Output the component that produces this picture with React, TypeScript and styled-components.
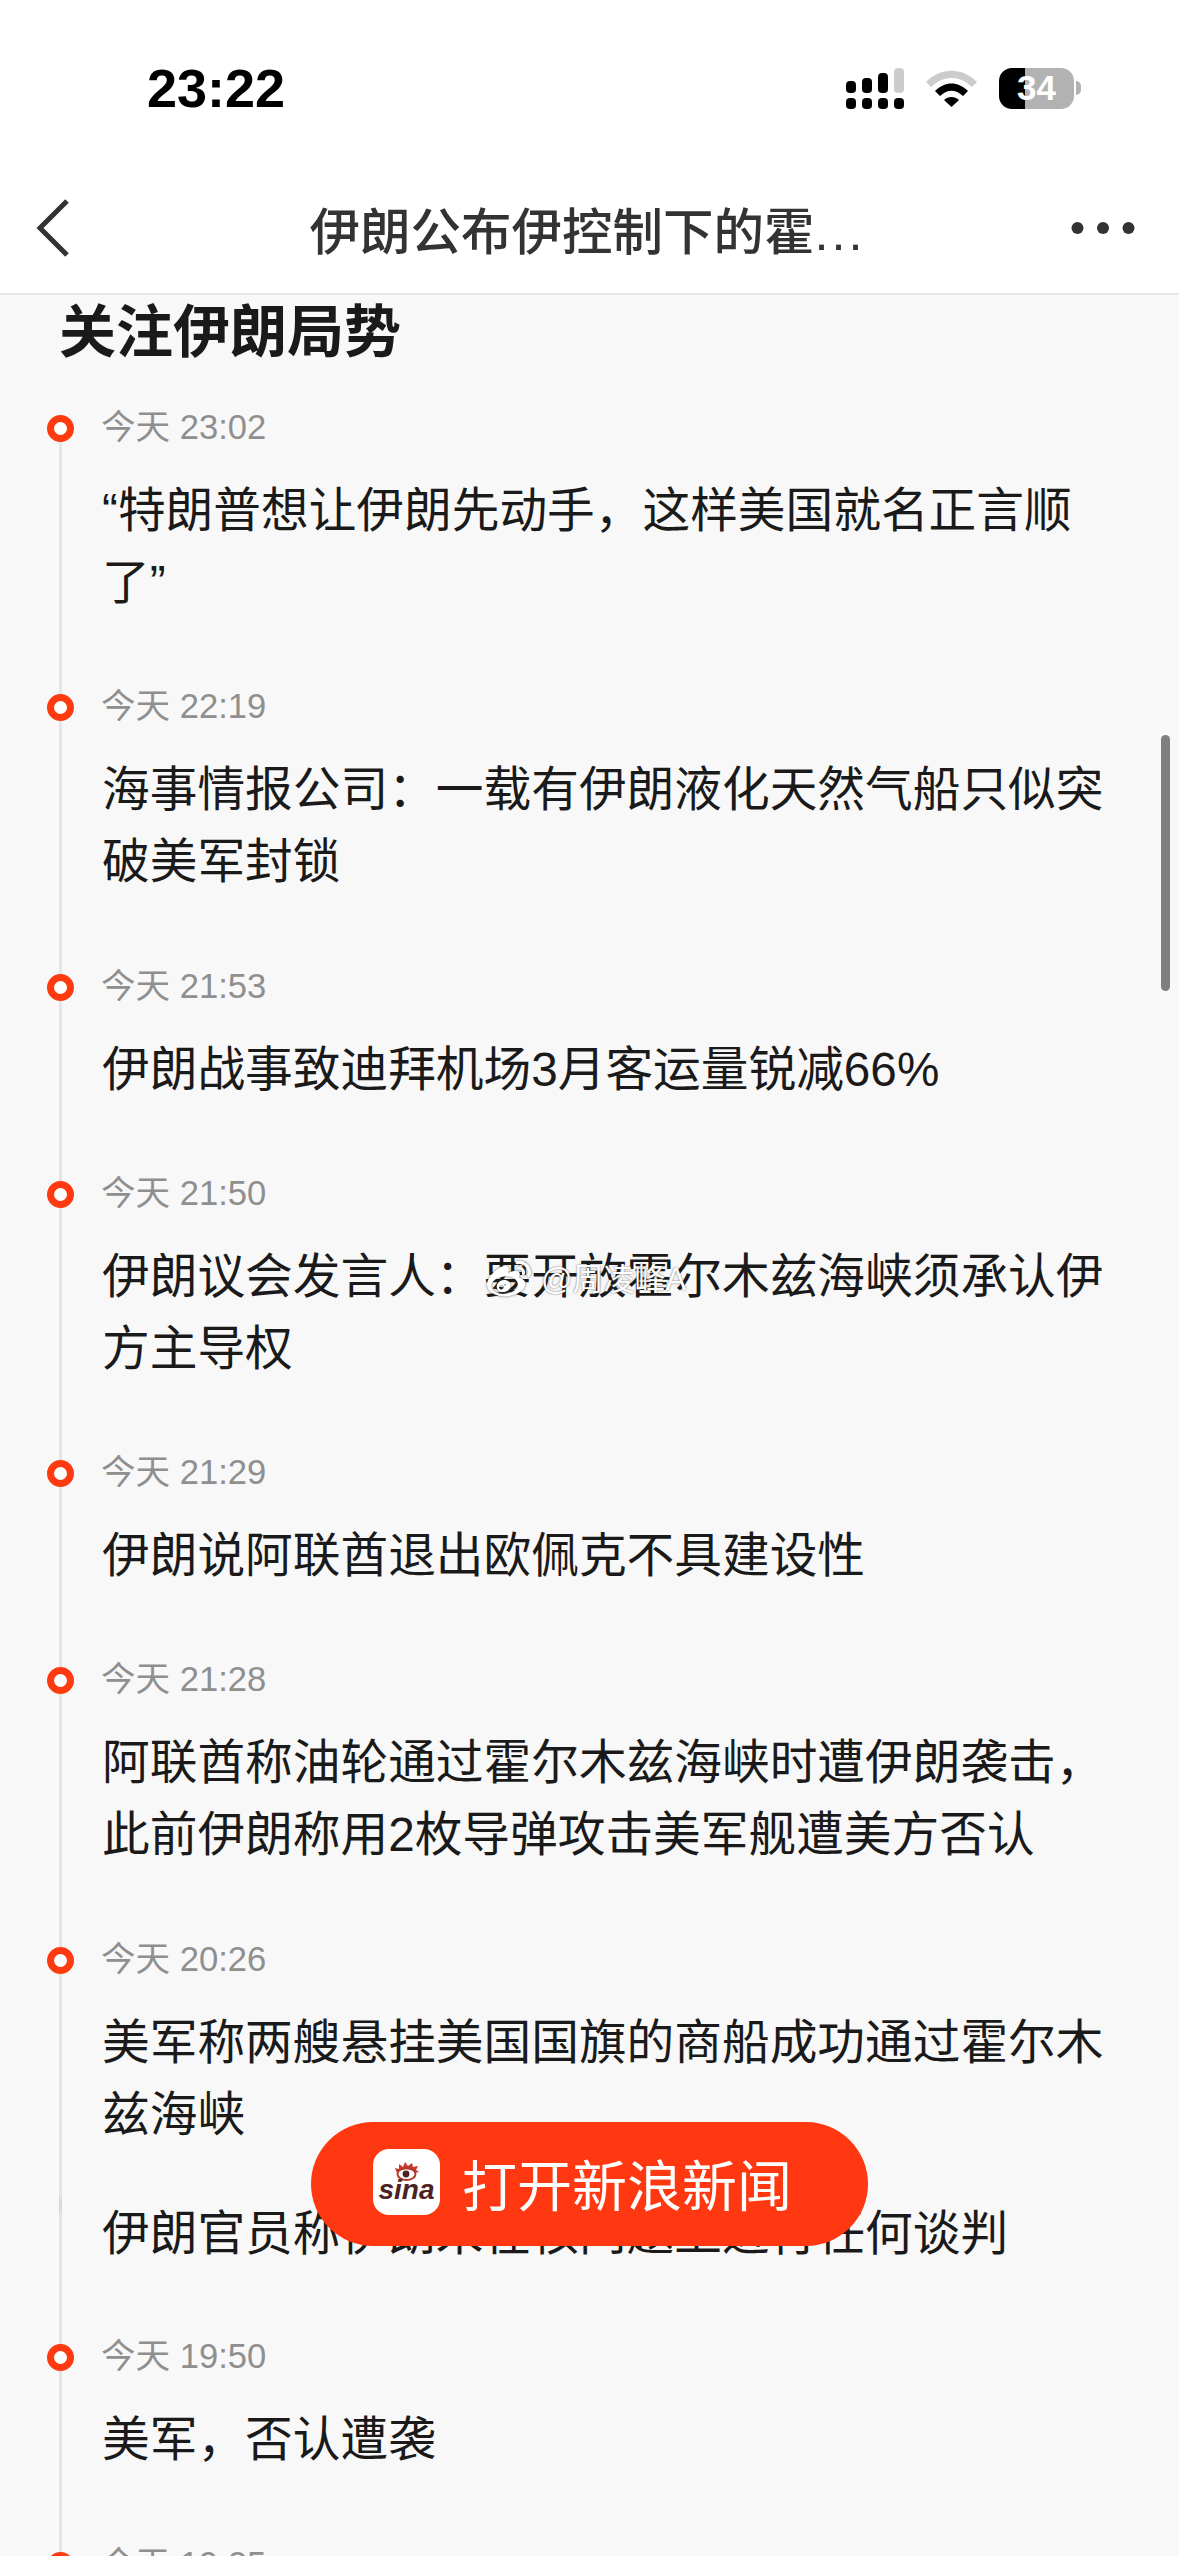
import styled, { createGlobalStyle } from 'styled-components'
import { FaWeibo } from 'react-icons/fa'

const GlobalStyle = createGlobalStyle`
  html, body {
    margin: 0;
    padding: 0;
    background: #f8f8f8;
  }
  * {
    box-sizing: border-box;
  }
`;

const Page = styled.div`
  position: relative;
  width: 1179px;
  height: 2556px;
  overflow: hidden;
  background: #f8f8f8;
  font-family: "Liberation Sans", "Noto Sans CJK SC", sans-serif;
`;

const StatusBar = styled.div`
  display: flex;
  align-items: center;
  height: 176px;
  padding: 0 98px 0 147px;
  background: #fff;
`;

const Clock = styled.div`
  font-size: 54px;
  font-weight: 700;
  color: #000;
`;

const StatusIcons = styled.div`
  display: flex;
  align-items: center;
  gap: 22px;
  margin-left: auto;
`;

const BatteryWrap = styled.div`
  display: flex;
  align-items: center;
  gap: 2px;
`;

const Battery = styled.div`
  display: flex;
  align-items: center;
  justify-content: center;
  width: 75px;
  height: 41px;
  border-radius: 13px;
  background: linear-gradient(90deg, #000 0 26px, #b2b2b2 26px);
  color: #fff;
  font-size: 35px;
  font-weight: 700;
`;

const BatteryNub = styled.div`
  width: 5px;
  height: 14px;
  border-radius: 0 7px 7px 0;
  background: #b2b2b2;
`;

const NavBar = styled.div`
  display: flex;
  align-items: center;
  height: 119px;
  padding: 0 44px 14px 36px;
  background: #fff;
  border-bottom: 2px solid #e6e6e6;
`;

const NavTitle = styled.div`
  flex: 1;
  padding-left: 34px;
  text-align: center;
  font-size: 50.5px;
  font-weight: 500;
  color: #333;
`;

const TitleDots = styled.span`
  letter-spacing: 3px;
`;

const Content = styled.div`
  padding-top: 5px;
`;

const Heading = styled.h2`
  margin: 0 0 39px 59px;
  font-size: 57px;
  line-height: 64px;
  font-weight: 700;
  color: #1a1a1a;
`;

const Item = styled.div<{ $noTime?: boolean }>`
  display: flex;
  padding-left: 47px;
  margin-top: ${({ $noTime }) => ($noTime ? '-16px' : '0')};
  margin-bottom: ${({ $noTime }) => ($noTime ? '-1px' : '0')};
`;

const Rail = styled.div<{ $first?: boolean }>`
  display: flex;
  flex-direction: column;
  align-items: center;
  flex: none;
  width: 27px;
  background: linear-gradient(90deg, transparent 12px, #e5e5e5 12px 15px, transparent 15px);
  background-repeat: no-repeat;
  background-position: 0 ${({ $first }) => ($first ? '12px' : '0')};
`;

const Dot = styled.div`
  width: 27px;
  height: 27px;
  margin-top: 12px;
  border: 7px solid #ff3a10;
  border-radius: 50%;
  background: #fff;
`;

const RailMark = styled.div`
  width: 3px;
  height: 15px;
  margin-top: -1px;
  background: #d9d9d9;
`;

const ItemBody = styled.div`
  width: 1012px;
  margin-left: 28px;
  padding-bottom: 63.3px;
`;

const ItemTime = styled.div`
  margin-left: -1px;
  margin-bottom: 24px;
  font-size: 34.6px;
  line-height: 48px;
  color: #8f8f8f;
`;

const ItemText = styled.div`
  font-size: 47.7px;
  line-height: 72px;
  color: #1a1a1a;
`;

const ScrollThumb = styled.div`
  position: absolute;
  top: 735px;
  right: 9px;
  width: 9px;
  height: 256px;
  border-radius: 5px;
  background: #7f7f7f;
`;

const Watermark = styled.div`
  position: absolute;
  top: 1258px;
  left: 487px;
  display: flex;
  align-items: center;
  gap: 10px;
  color: #fff;
  font-size: 31px;
  line-height: 40px;
  text-shadow: 0 0 2px rgba(60, 60, 60, 0.8);

  svg {
    filter: drop-shadow(0 0 1px rgba(60, 60, 60, 0.8));
  }
`;

const OpenAppButton = styled.div`
  position: absolute;
  left: 311px;
  bottom: 310px;
  display: flex;
  align-items: center;
  gap: 22px;
  width: 557px;
  height: 124px;
  padding-left: 62px;
  border-radius: 62px;
  background: #ff3811;
  color: #fff;
  font-size: 55px;
  font-weight: 400;
`;

const ButtonLabel = styled.span`
  margin-top: -4px;
`;

const SinaLogo = styled.div`
  display: flex;
  flex-direction: column;
  align-items: center;
  width: 67px;
  height: 66px;
  margin-top: -4px;
  padding-top: 13px;
  border-radius: 16px;
  background: #fff;
`;

const SinaWord = styled.div`
  margin-top: -5px;
  font-size: 28px;
  line-height: 28px;
  font-weight: 700;
  font-style: italic;
  color: #4d2222;
`;

type Entry = { time?: string; text: string };

const entries: Entry[] = [
  { time: '今天 23:02', text: '“特朗普想让伊朗先动手，这样美国就名正言顺了”' },
  { time: '今天 22:19', text: '海事情报公司：一载有伊朗液化天然气船只似突破美军封锁' },
  { time: '今天 21:53', text: '伊朗战事致迪拜机场3月客运量锐减66%' },
  { time: '今天 21:50', text: '伊朗议会发言人：要开放霍尔木兹海峡须承认伊方主导权' },
  { time: '今天 21:29', text: '伊朗说阿联酋退出欧佩克不具建设性' },
  { time: '今天 21:28', text: '阿联酋称油轮通过霍尔木兹海峡时遭伊朗袭击，此前伊朗称用2枚导弹攻击美军舰遭美方否认' },
  { time: '今天 20:26', text: '美军称两艘悬挂美国国旗的商船成功通过霍尔木兹海峡' },
  { text: '伊朗官员称伊朗未在核问题上进行任何谈判' },
  { time: '今天 19:50', text: '美军，否认遭袭' },
  { time: '今天 19:25', text: '' },
];

function SignalIcon() {
  return (
    <svg width="58" height="41" viewBox="0 0 58 41">
      <rect x="0" y="13" width="10" height="12" rx="4" fill="#000" />
      <rect x="16" y="10" width="10" height="15" rx="4" fill="#000" />
      <rect x="32" y="5" width="10" height="20" rx="4" fill="#000" />
      <rect x="48" y="0" width="10" height="25" rx="4" fill="#ccc" />
      <rect x="0" y="30" width="10" height="11" rx="4" fill="#000" />
      <rect x="16" y="30" width="10" height="11" rx="4" fill="#000" />
      <rect x="32" y="30" width="10" height="11" rx="4" fill="#000" />
      <rect x="48" y="30" width="10" height="11" rx="4" fill="#000" />
    </svg>
  );
}

function WifiIcon() {
  return (
    <svg width="51" height="37" viewBox="0 0 51 37">
      <path d="M0 12 C15 -3 36 -3 51 12 L46 17 C33 5 18 5 5 17 Z" fill="#ccc" />
      <path d="M9 21 C19 11 32 11 42 21 L37 26 C29 19 22 19 14 26 Z" fill="#000" />
      <path d="M18 30 C22 26 29 26 33 30 L25.5 37 Z" fill="#000" />
    </svg>
  );
}

function BackIcon() {
  return (
    <svg width="34" height="58" viewBox="0 0 34 58">
      <path d="M31 2 L4 29 L31 56" fill="none" stroke="#333" strokeWidth="5" />
    </svg>
  );
}

function MoreIcon() {
  return (
    <svg width="64" height="14" viewBox="0 0 64 14">
      <circle cx="6.5" cy="7" r="6" fill="#333" />
      <circle cx="32" cy="7" r="6" fill="#333" />
      <circle cx="57.5" cy="7" r="6" fill="#333" />
    </svg>
  );
}

function SinaEye() {
  return (
    <svg width="26" height="19" viewBox="0 0 26 19">
      <path
        d="M3 11 L1 6 L5 7 L5 2 L9 5 L11 0 L14 4 L18 1 L19 5 L24 4 L22 8 L25 10 L21 11 C17 6 8 6 3 11 Z"
        fill="#c8392b"
      />
      <ellipse cx="12.5" cy="12" rx="9" ry="6" fill="none" stroke="#b5392c" strokeWidth="2" />
      <circle cx="12" cy="12" r="3.4" fill="#4d2222" />
    </svg>
  );
}

function App() {
  return (
    <Page>
      <GlobalStyle />
      <StatusBar>
        <Clock>23:22</Clock>
        <StatusIcons>
          <SignalIcon />
          <WifiIcon />
          <BatteryWrap>
            <Battery>34</Battery>
            <BatteryNub />
          </BatteryWrap>
        </StatusIcons>
      </StatusBar>
      <NavBar>
        <BackIcon />
        <NavTitle>伊朗公布伊控制下的霍<TitleDots>...</TitleDots></NavTitle>
        <MoreIcon />
      </NavBar>
      <Content>
        <Heading>关注伊朗局势</Heading>
        {entries.map((entry, i) => (
          <Item key={i} $noTime={!entry.time}>
            <Rail $first={i === 0}>
              {entry.time ? <Dot /> : <RailMark />}
            </Rail>
            <ItemBody>
              {entry.time && <ItemTime>{entry.time}</ItemTime>}
              <ItemText>{entry.text}</ItemText>
            </ItemBody>
          </Item>
        ))}
      </Content>
      <ScrollThumb />
      <Watermark>
        <FaWeibo size={44} />
        <span>@周凌峰A</span>
      </Watermark>
      <OpenAppButton>
        <SinaLogo>
          <SinaEye />
          <SinaWord>sina</SinaWord>
        </SinaLogo>
        <ButtonLabel>打开新浪新闻</ButtonLabel>
      </OpenAppButton>
    </Page>
  )
}

export default App
